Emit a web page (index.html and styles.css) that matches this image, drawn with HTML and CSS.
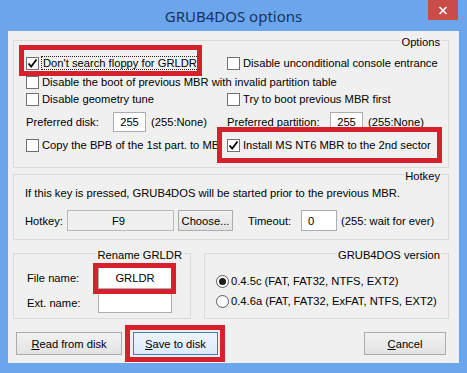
FILE: index.html
```html
<!DOCTYPE html>
<html lang="en">
<head>
    <meta charset="UTF-8">
    <title>GRUB4DOS options</title>
    <link rel="stylesheet" href="styles.css">
</head>
<body>
<div class="window">
    <!-- Title bar -->
    <div class="titlebar">
        <span class="title">GRUB4DOS options</span>
        <span class="close">
            <svg width="10" height="9" viewBox="0 0 10 9"><path d="M1.5 1 L8.5 8 M8.5 1 L1.5 8" stroke="#fff" stroke-width="1.6" fill="none"/></svg>
        </span>
    </div>

    <div class="client">
        <!-- Options -->
        <div class="group options">
            <span class="legend">Options</span>
            <div class="opt-grid">
                <label class="check hl hl-floppy"><span class="box on"><svg width="11" height="11" viewBox="0 0 11 11"><path d="M1.5 5.5 L4.2 8.5 L9.5 1.5" stroke="#000" stroke-width="1.8" fill="none"/></svg></span><span class="focus">Don't search floppy for GRLDR</span></label>
                <label class="check"><span class="box"></span>Disable unconditional console entrance</label>
                <label class="check span2"><span class="box"></span>Disable the boot of previous MBR with invalid partition table</label>
                <label class="check"><span class="box"></span>Disable geometry tune</label>
                <label class="check"><span class="box"></span>Try to boot previous MBR first</label>
                <div class="field"><span class="lbl-disk">Preferred disk:</span><span class="edit num">255</span><span>(255:None)</span></div>
                <div class="field"><span class="lbl-part">Preferred partition:</span><span class="edit num">255</span><span>(255:None)</span></div>
                <label class="check clip"><span class="box"></span>Copy the BPB of the 1st part. to MBR</label>
                <label class="check hl hl-nt6"><span class="box on"><svg width="11" height="11" viewBox="0 0 11 11"><path d="M1.5 5.5 L4.2 8.5 L9.5 1.5" stroke="#000" stroke-width="1.8" fill="none"/></svg></span>Install MS NT6 MBR to the 2nd sector</label>
            </div>
        </div>

        <!-- Hotkey -->
        <div class="group hotkey">
            <span class="legend">Hotkey</span>
            <div class="hint">If this key is pressed, GRUB4DOS will be started prior to the previous MBR.</div>
            <div class="hotkey-row">
                <span class="lbl-hotkey">Hotkey:</span>
                <span class="edit readonly">F9</span>
                <span class="btn small">Choose...</span>
                <span class="lbl-timeout">Timeout:</span>
                <span class="edit timeout">0</span>
                <span>(255: wait for ever)</span>
            </div>
        </div>

        <div class="lower">
            <!-- Rename GRLDR -->
            <div class="group rename">
                <span class="legend">Rename GRLDR</span>
                <div class="name-row"><span class="lbl-name">File name:</span><span class="edit name hl hl-grldr">GRLDR</span></div>
                <div class="name-row"><span class="lbl-name">Ext. name:</span><span class="edit name ext"></span></div>
            </div>

            <!-- Version -->
            <div class="group version">
                <span class="legend">GRUB4DOS version</span>
                <label class="radio-row"><span class="radio on"></span>0.4.5c (FAT, FAT32, NTFS, EXT2)</label>
                <label class="radio-row"><span class="radio"></span>0.4.6a (FAT, FAT32, ExFAT, NTFS, EXT2)</label>
            </div>
        </div>

        <div class="buttons">
            <span class="btn read"><u>R</u>ead from disk</span>
            <span class="btn save hl hl-save"><u>S</u>ave to disk</span>
            <span class="btn cancel"><u>C</u>ancel</span>
        </div>
    </div>
</div>
</body>
</html>
```

FILE: styles.css
```css
body {
    margin: 0;
    font-family: "Liberation Sans", Arial, sans-serif;
    font-size: 11.2px;
    color: #000;
}

/* Window frame */
.window {
    width: 467px;
    height: 373px;
    background: #6ba6ec;
    display: flex;
    flex-direction: column;
}

.titlebar {
    position: relative;
    height: 31px;
    display: flex;
    justify-content: center;
    align-items: center;
}

.title {
    font-family: "Noto Sans", sans-serif;
    font-size: 15px;
    color: #17345c;
}

.close {
    position: absolute;
    top: 0;
    right: 9px;
    width: 30px;
    height: 20px;
    background: #c94c49;
    display: flex;
    align-items: center;
    justify-content: center;
}

.client {
    margin: 0 8px;
    height: 332px;
    box-sizing: border-box;
    padding: 9px 10px 0 5px;
    background: #f0f0f0;
}

/* Group boxes */
.group {
    position: relative;
    border: 1px solid #dadada;
    box-sizing: border-box;
}

.legend {
    position: absolute;
    top: -6px;
    right: 7px;
    line-height: 14px;
    padding: 0 1px;
    background: #f0f0f0;
}

.options {
    height: 128px;
    padding: 12px 0 0 12px;
}

.opt-grid {
    display: grid;
    grid-template-columns: 201px 1fr;
    grid-template-rows: 20px 18px 16px 30px 16px;
}

.check {
    display: flex;
    align-items: center;
    gap: 3px;
    white-space: nowrap;
}

.span2 {
    grid-column: 1 / 3;
}

.clip {
    width: 195px;
    overflow: hidden;
}

.box {
    width: 13px;
    height: 13px;
    box-sizing: border-box;
    border: 1px solid #707070;
    background: #fff;
    display: flex;
    align-items: center;
    justify-content: center;
    flex: none;
}

.focus {
    outline: 1px dotted #222;
    padding: 0 1px;
}

.field {
    display: flex;
    align-items: center;
    gap: 5px;
    white-space: nowrap;
}

.lbl-disk { width: 82px; }
.lbl-part { width: 98px; }

.edit {
    height: 20px;
    box-sizing: border-box;
    border: 1px solid #abadb3;
    background: #fff;
    display: flex;
    align-items: center;
    justify-content: center;
}

.num { width: 33px; }

/* Hotkey */
.hotkey {
    margin-top: 6px;
    height: 66px;
    padding: 11px 0 0 11px;
}

.hint {
    line-height: 14px;
}

.hotkey-row {
    margin-top: 10px;
    display: flex;
    align-items: center;
    white-space: nowrap;
}

.hotkey-row .edit,
.hotkey-row .btn {
    height: 21px;
}

.lbl-hotkey { width: 42px; }

.readonly {
    width: 107px;
    background: #f0f0f0;
    border-color: #b9b9b9;
    padding-right: 4px;
}

.small {
    width: 55px;
    margin-left: 4px;
}

.lbl-timeout {
    margin-left: 15px;
    width: 53px;
}

.timeout {
    width: 36px;
    justify-content: flex-start;
    padding-left: 6px;
    margin-right: 4px;
}

/* Lower groups */
.lower {
    margin-top: 13px;
    display: flex;
    gap: 13px;
}

.rename {
    width: 178px;
    height: 66px;
    padding: 13px 0 0 13px;
}

.name-row {
    display: flex;
    align-items: center;
}

.name-row + .name-row {
    margin-top: 4px;
}

.lbl-name { width: 71px; }

.name {
    width: 74px;
    height: 22px;
}

.ext { height: 20px; }

.version {
    flex: 1;
    height: 66px;
    padding: 17px 0 0 11px;
}

.radio-row {
    display: flex;
    align-items: center;
    gap: 2px;
    height: 20px;
    white-space: nowrap;
}

.radio {
    width: 13px;
    height: 13px;
    box-sizing: border-box;
    border: 1px solid #5a5a5a;
    border-radius: 50%;
    background: #fff;
    display: flex;
    align-items: center;
    justify-content: center;
}

.radio.on::before {
    content: '';
    width: 7px;
    height: 7px;
    border-radius: 50%;
    background: #1c1c1c;
}

/* Buttons */
.buttons {
    margin-top: 13px;
    padding-left: 3px;
    display: flex;
}

.btn {
    height: 23px;
    box-sizing: border-box;
    border: 1px solid #acacac;
    background: linear-gradient(#f2f2f2, #e3e3e3);
    display: flex;
    align-items: center;
    justify-content: center;
    white-space: nowrap;
}

.read { width: 106px; }

.save {
    width: 85px;
    margin-left: 11px;
    border-color: #3c7fb1;
    background: linear-gradient(#ecf4fc, #dcecfc);
}

.cancel {
    width: 82px;
    margin-left: auto;
    margin-right: 3px;
}

/* Red highlight frames drawn over the screenshot */
.hl {
    position: relative;
}

.hl::after {
    content: '';
    position: absolute;
    border: 5px solid #d7202b;
    pointer-events: none;
}

.hl-floppy {
    justify-self: start;
    padding-right: 2px;
}

.hl-floppy::after {
    left: -7px;
    right: -2px;
    top: -8px;
    bottom: -3px;
}

.hl-nt6 {
    justify-self: start;
    width: 196px;
}

.hl-nt6::after {
    left: -10px;
    right: -19px;
    top: -10px;
    bottom: -10px;
}

.hl-grldr::after {
    left: -6px;
    right: -5px;
    top: -5px;
    bottom: -6px;
}

.hl-save::after {
    left: -9px;
    right: -8px;
    top: -8px;
    bottom: -8px;
}
```
